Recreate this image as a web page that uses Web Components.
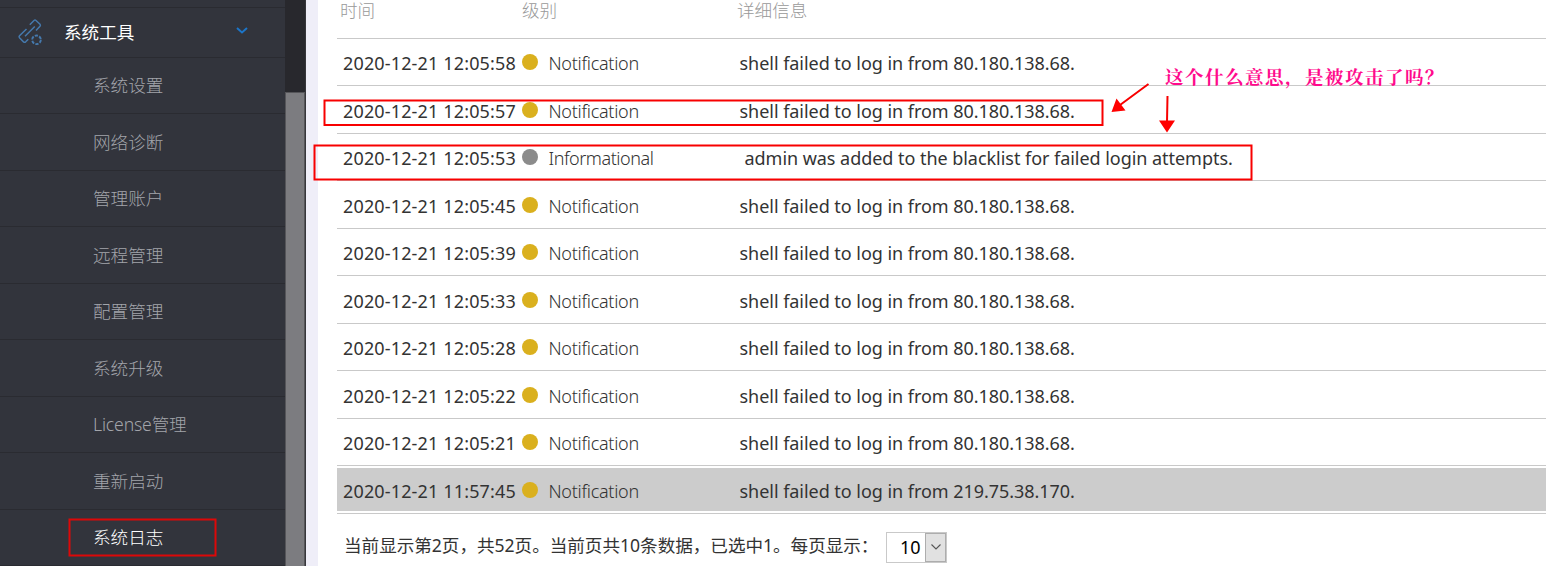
<!DOCTYPE html>
<html lang="zh-CN">
<head>
<meta charset="utf-8">
<title>系统日志</title>
<style>
html,body{margin:0;height:100%;overflow:hidden;background:#fff}
body{font-family:"Noto Sans","Noto Sans CJK SC",sans-serif;color:#333}
</style>
</head>
<body>
<log-app></log-app>
<script>
const define=(name,html,init)=>customElements.define(name,class extends HTMLElement{
  connectedCallback(){
    if(this.shadowRoot)return;
    const root=this.attachShadow({mode:'open'});
    const t=document.createElement('template');
    t.innerHTML=html;
    root.append(t.content.cloneNode(true));
    if(init)init.call(this,root);
  }
});

define('menu-item',`<style>
:host{display:flex;align-items:center;box-sizing:border-box;height:56.5px;padding:0 0 .4px 93px;border-bottom:1px solid #2a2b31;color:#a3a5ab;font:300 17.6px/24px "Noto Sans","Noto Sans CJK SC",sans-serif;white-space:nowrap}
:host([active]){color:#fff}
:host([latin]){letter-spacing:-.15px}
span{display:block}
</style><span><slot></slot></span>`);

define('menu-group',`<style>
:host{display:flex;align-items:center;box-sizing:border-box;height:50px;padding:0 0 1px 17px;border-bottom:1px solid #2a2b31;color:#fff;font:400 17.6px/24px "Noto Sans CJK SC",sans-serif}
.icon{width:26px;height:28px;margin-right:21px;margin-top:-1px}
.label{flex:none;width:172px}
.chev{margin-top:-2px}
</style>
<svg class="icon" viewBox="0 0 26 28" fill="none" stroke="#4579ad" stroke-width="1.5"><path d="M12.800 7.800L17 3.500q1-.8 2 0l4 3.800q.8 1 0 2l-4 4.200M9.500 12l-7 6.800q-.9 1 0 2l4 4q1.200.8 2.200 0l2.600-2.600M8 19.300l9.800-9.800"/><circle cx="19.500" cy="22.800" r="4.300" stroke-width="1.900" stroke-dasharray="3.200 1.300"/></svg>
<span class="label"><slot></slot></span>
<svg class="chev" width="12" height="8" viewBox="0 0 12 8" fill="none" stroke="#1c75c8" stroke-width="2"><path d="M1 1l5 4.500L11 1"/></svg>`);

define('side-bar',`<style>
:host{display:flex;width:306px;height:566px;overflow:hidden;background:#32343c}
nav{width:285px;flex:none}
.top{height:6.500px;border-bottom:1px solid #2a2b31}
.track{width:20px;flex:none;background:#28282d;border-right:1px solid #37373b;display:flex;flex-direction:column}
.thumb{margin-top:92px;flex:1;box-sizing:border-box;background:#7c7c80;border:1px solid #555559;border-bottom:0}
</style>
<nav><div class="top"></div><slot></slot></nav><div class="track"><div class="thumb"></div></div>`);

define('log-row',`<style>
:host{display:block;height:47.5px;box-sizing:border-box;border-bottom:1px solid #c9c9c9;padding:2px 0}
.row{display:grid;grid-template-columns:185px 20.5px 191px 1fr;height:43px;align-items:center;padding:1.800px 0 0 6px;box-sizing:border-box;font-size:18px;line-height:24px;white-space:pre}
:host([selected]) .row{background:#ccc}
i{width:16px;height:16px;border-radius:50%;background:#dab01e;margin-left:-6px;margin-top:-2px}
:host([info]) i{background:#8b8b8b}
.level{font-weight:300;letter-spacing:-.28px}
:host([info]) .level{letter-spacing:-.45px}
.time{letter-spacing:.15px}
.msg{letter-spacing:-.04px}
:host([info]) .msg{padding-left:5px}
</style><div class="row"><span class="time"></span><i></i><span class="level"></span><span class="msg"><slot></slot></span></div>`,function(r){
  r.querySelector('.time').textContent=this.getAttribute('time');
  r.querySelector('.level').textContent=this.hasAttribute('info')?'Informational':'Notification';
});

define('log-head',`<style>
:host{display:grid;grid-template-columns:182px 215px 1fr;box-sizing:border-box;height:38.7px;padding-top:1px;border-bottom:1px solid #c9c9c9;padding-left:3px;color:#999;font:300 17.6px/20px "Liberation Sans","Noto Sans CJK SC",sans-serif}
</style><span>时间</span><span>级别</span><span>详细信息</span>`);

define('page-size',`<style>
:host{display:flex;box-sizing:border-box;width:61px;height:31px;border:1px solid #c9c9c9;background:#fff;color:#000;font:18px/28px "Noto Sans",sans-serif}
span{width:38px;box-sizing:border-box;padding-left:13px}
b{width:21px;box-sizing:border-box;border:1px solid #adadad;background:#e1e1e1;display:flex;align-items:center;justify-content:center}
</style><span><slot></slot></span><b><svg width="10" height="6" viewBox="0 0 10 6" fill="none" stroke="#555" stroke-width="1.100"><path d="M.5.5L5 5 9.500.5"/></svg></b>`);

define('log-footer',`<style>
:host{display:flex;padding:18.300px 0 0 7px;font-size:17.6px;line-height:26px;white-space:nowrap}
.t{width:542px;flex:none;letter-spacing:-.03px}
</style><span class="t">当前显示第2页，共52页。当前页共10条数据，已选中1。每页显示：</span><page-size>10</page-size>`);

define('mark-layer',`<style>
:host{position:absolute;inset:0;pointer-events:none}
svg{position:absolute;inset:0}
p{position:absolute;left:1165px;top:63px;margin:0;color:#ff0a8c;font:700 18.500px/26px "Noto Serif CJK SC","Noto Sans CJK SC",serif;letter-spacing:1.500px;white-space:nowrap}
</style>
<svg width="1546" height="566" viewBox="0 0 1546 566" fill="none" stroke="#f80000" stroke-width="2">
<rect x="324.500" y="100.500" width="778" height="24.500"/><rect x="314.500" y="145.500" width="937" height="34"/><rect x="69.500" y="519.500" width="146" height="36" stroke="#dd0808"/>
<path d="M1148.500 84L1120 105M1167.500 96L1167 122"/><path d="M1111.500 112l5-13.500 9 12zM1159 120.500h16L1167 132.500z" fill="#f00" stroke="none"/></svg>
<p>这个什么意思，是被攻击了吗？</p>`);

define('log-app',`<style>
:host{display:flex;position:relative;width:1546px;height:566px;overflow:hidden}
main{flex:1;min-width:0;border-left:12px solid #efeef8;padding-left:19px}
</style>
<side-bar><menu-group>系统工具</menu-group><menu-item>系统设置</menu-item><menu-item>网络诊断</menu-item><menu-item>管理账户</menu-item><menu-item>远程管理</menu-item><menu-item>配置管理</menu-item><menu-item>系统升级</menu-item><menu-item latin>License管理</menu-item><menu-item>重新启动</menu-item><menu-item active>系统日志</menu-item></side-bar>
<main><log-head></log-head>
<log-row time="2020-12-21 12:05:58">shell failed to log in from 80.180.138.68.</log-row>
<log-row time="2020-12-21 12:05:57">shell failed to log in from 80.180.138.68.</log-row>
<log-row time="2020-12-21 12:05:53" info>admin was added to the blacklist for failed login attempts.</log-row>
<log-row time="2020-12-21 12:05:45">shell failed to log in from 80.180.138.68.</log-row>
<log-row time="2020-12-21 12:05:39">shell failed to log in from 80.180.138.68.</log-row>
<log-row time="2020-12-21 12:05:33">shell failed to log in from 80.180.138.68.</log-row>
<log-row time="2020-12-21 12:05:28">shell failed to log in from 80.180.138.68.</log-row>
<log-row time="2020-12-21 12:05:22">shell failed to log in from 80.180.138.68.</log-row>
<log-row time="2020-12-21 12:05:21">shell failed to log in from 80.180.138.68.</log-row>
<log-row time="2020-12-21 11:57:45" selected>shell failed to log in from 219.75.38.170.</log-row>
<log-footer></log-footer></main>
<mark-layer></mark-layer>`);
</script>
</body>
</html>
